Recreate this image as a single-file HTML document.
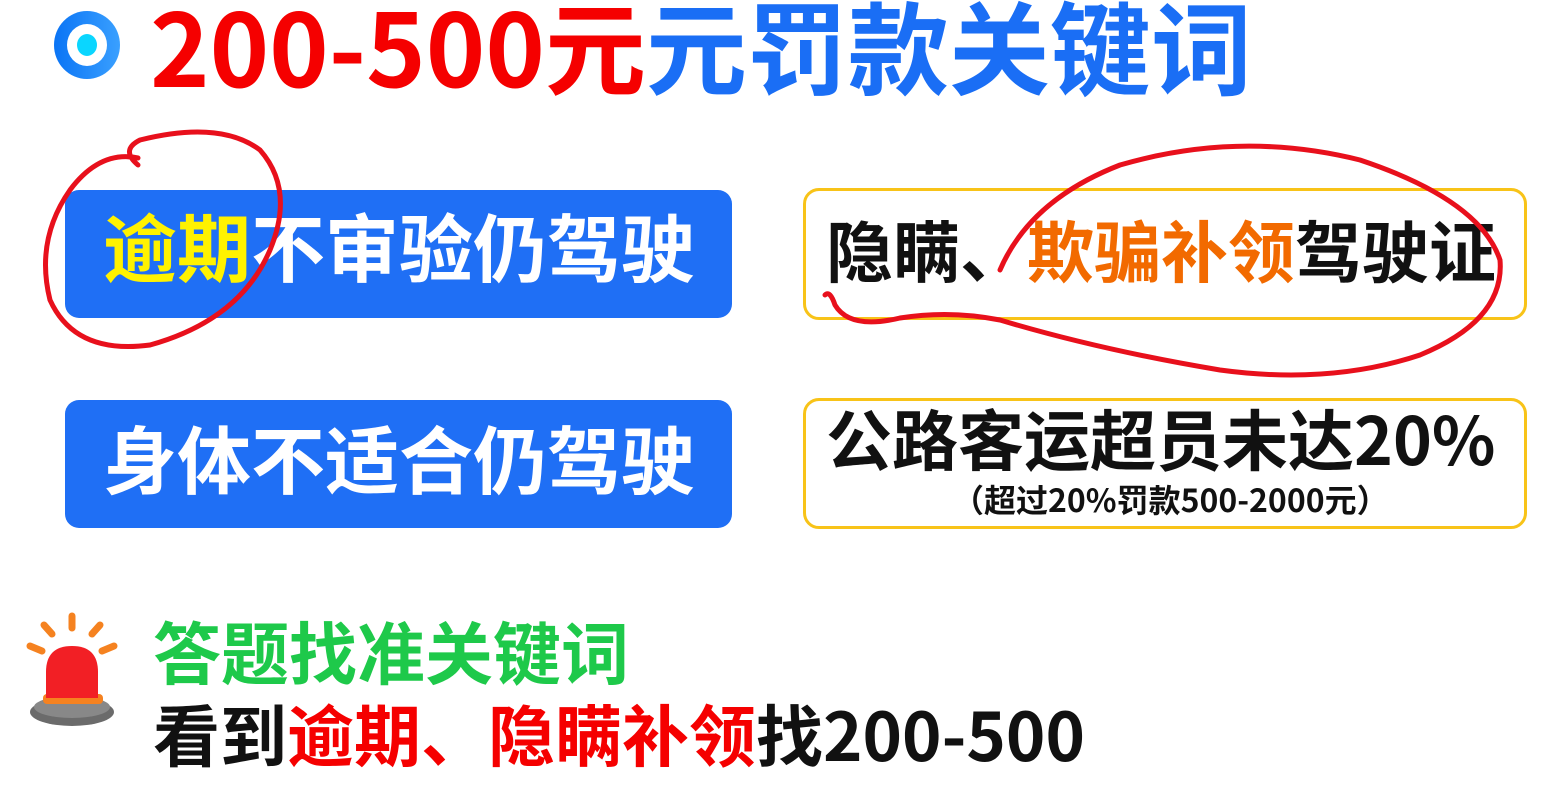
<!DOCTYPE html>
<html><head><meta charset="utf-8"><style>
body{margin:0;width:1547px;height:797px;background:#fff;overflow:hidden;position:relative;font-family:"Noto Sans CJK SC","Liberation Sans",sans-serif;font-weight:bold}
.a{position:absolute;white-space:nowrap}
.bb{position:absolute;background:#1f6ff5;border-radius:14px;color:#fff;font-size:74px;line-height:128px}
.yb{position:absolute;border:3px solid #f8c318;border-radius:16px;box-sizing:border-box}
</style></head><body>
<svg class="a" style="left:50px;top:8px" width="75" height="75"><defs><linearGradient id="g" x1="0" x2="1"><stop offset="0" stop-color="#0a74f5"/><stop offset="1" stop-color="#3aa0ff"/></linearGradient></defs><ellipse cx="37" cy="37" rx="33" ry="34" fill="url(#g)"/><ellipse cx="37" cy="37" rx="20" ry="21" fill="#fff"/><ellipse cx="37" cy="37" rx="10" ry="11" fill="#0ad6ff"/></svg>
<div class="a" style="left:150px;top:-16px;font-size:101px;line-height:120px"><span style="color:#f50000">200-500元</span><span style="color:#1a6ef5">元罚款关键词</span></div>
<div class="bb" style="left:65px;top:190px;width:667px;height:128px"><span style="position:absolute;left:38px;top:-9px"><span style="color:#fff200">逾期</span>不审验仍驾驶</span></div>
<div class="bb" style="left:65px;top:400px;width:667px;height:128px"><span style="position:absolute;left:38px;top:-7px">身体不适合仍驾驶</span></div>
<div class="yb" style="left:803px;top:188px;width:724px;height:132px"><span class="a" style="left:20px;top:-6px;font-size:67px;line-height:128px;color:#111">隐瞒、<span style="color:#f26a00">欺骗补领</span>驾驶证</span></div>
<div class="yb" style="left:803px;top:398px;width:724px;height:131px"><span class="a" style="left:20px;top:-4px;font-size:66px;line-height:80px;color:#111">公路客运超员未达20%</span><span class="a" style="left:146px;top:80px;font-size:32px;line-height:36px;color:#111">（超过20%罚款500-2000元）</span></div>
<div class="a" style="left:153px;top:610px;font-size:68px;line-height:80px;color:#1ec94a">答题找准关键词</div>
<div class="a" style="left:153px;top:693px;font-size:67px;line-height:80px;color:#111">看到<span style="color:#f50000">逾期、隐瞒补领</span>找200-500</div>
<svg class="a" style="left:20px;top:610px" width="100" height="120">
<g stroke="#f58220" stroke-width="7" stroke-linecap="round"><line x1="52" y1="6" x2="52" y2="18"/><line x1="24" y1="15" x2="32" y2="24"/><line x1="80" y1="15" x2="72" y2="24"/><line x1="10" y1="36" x2="22" y2="41"/><line x1="94" y1="36" x2="82" y2="41"/></g>
<ellipse cx="52" cy="102" rx="42" ry="14" fill="#6b6b6b"/><ellipse cx="52" cy="97" rx="38" ry="11" fill="#888"/>
<rect x="23" y="84" width="60" height="10" rx="4" fill="#f58220"/>
<path d="M26 88 V62 Q26 36 52 36 Q78 36 78 62 V88 Z" fill="#f21f25"/>
</svg>
<svg class="a" style="left:0;top:0" width="1547" height="797" fill="none" stroke="#e8101c" stroke-width="5" stroke-linecap="round">
<path d="M138 158 Q100 150 70 190 Q35 240 50 300 Q75 355 150 345 Q240 320 270 250 Q295 190 260 150 Q220 120 140 140 Q120 150 138 165"/>
<path d="M1000 270 Q1030 200 1120 165 Q1240 130 1360 160 Q1480 200 1500 260 Q1505 320 1420 355 Q1330 385 1220 370 Q1100 350 1000 320 Q950 310 900 318 Q850 330 835 305 Q830 290 825 295"/>
</svg>
</body></html>
